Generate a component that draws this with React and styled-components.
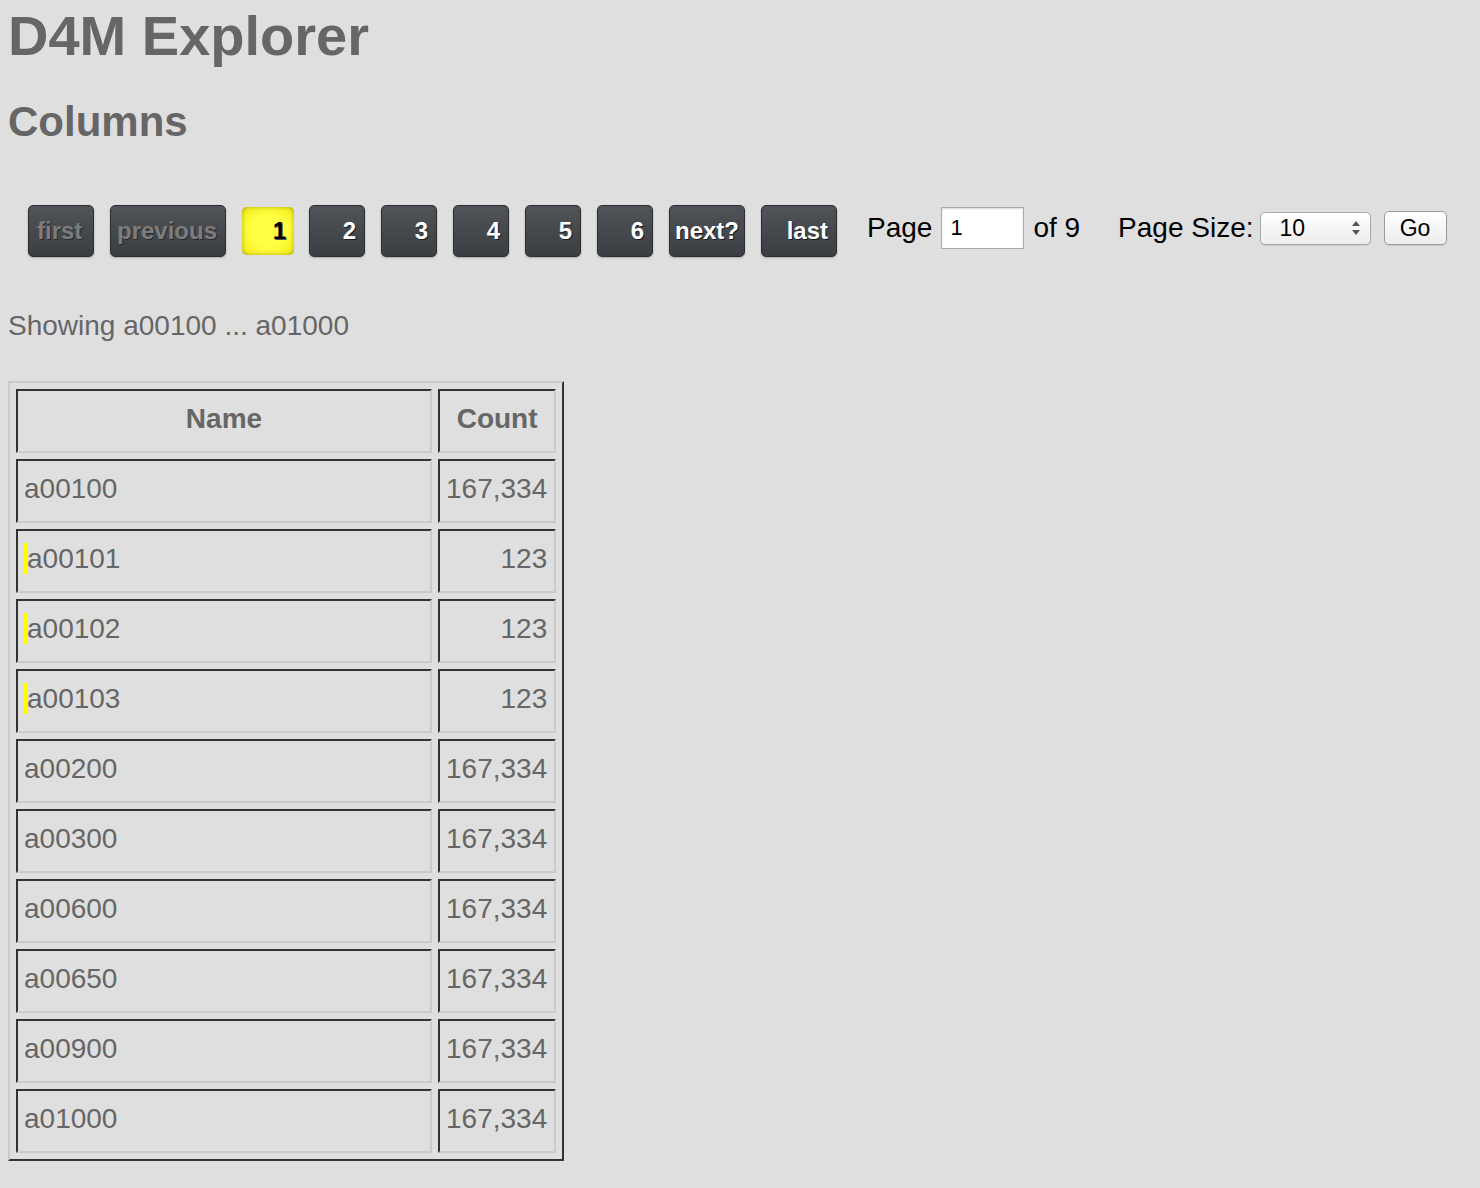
import React from "react"
import styled, { createGlobalStyle } from "styled-components"

const GlobalStyle = createGlobalStyle`
  html, body {
    margin: 0;
    padding: 0;
    background: #dfdfdf;
    font-family: "Liberation Sans", Arial, Helvetica, sans-serif;
    color: #666;
  }
`

const Page = styled.div`
  padding: 0 8px 40px 8px;
`

const Title = styled.h1`
  margin: 0;
  padding-top: 4px;
  font-size: 56px;
  line-height: 64px;
  font-weight: bold;
  color: #666;
`

const Subtitle = styled.h2`
  margin: 30px 0 0 0;
  font-size: 42px;
  line-height: 48px;
  font-weight: bold;
  color: #666;
`

const Pager = styled.div`
  display: flex;
  align-items: center;
  margin: 59px 0 0 20px;
  height: 52px;
`

const PageButtons = styled.div`
  display: flex;
  align-items: center;
  gap: 16px;
`

const PageButton = styled.a`
  box-sizing: border-box;
  display: flex;
  align-items: center;
  justify-content: ${(p) => p.$align || "flex-end"};
  width: ${(p) => p.$w}px;
  height: 52px;
  padding: 0 8px;
  border: 1px solid #2b2d30;
  border-radius: 5px;
  background: linear-gradient(#50545a, #3a3d41);
  box-shadow: 0 1px 2px rgba(0, 0, 0, 0.25);
  font-size: 24px;
  font-weight: bold;
  color: ${(p) => (p.$disabled ? "#7d7d7d" : "#fff")};
  text-shadow: ${(p) =>
    p.$disabled ? "1px 1px 0 #2a2a2a" : "1px 1px 0 #1c1c1c"};
  text-decoration: none;
  cursor: pointer;
`

const CurrentButton = styled.span`
  box-sizing: border-box;
  display: flex;
  align-items: center;
  justify-content: flex-end;
  width: 52px;
  height: 48px;
  margin-right: -1px;
  padding: 0 8px;
  border-radius: 5px;
  background: radial-gradient(ellipse at center, #ffff44 45%, #f4f020 85%, #d8d000 100%);
  box-shadow: inset 0 0 4px rgba(140, 130, 0, 0.6);
  font-size: 24px;
  font-weight: bold;
  color: #000;
  text-shadow: 1px 1px 0 #555;
`

const Controls = styled.div`
  display: flex;
  align-items: center;
  padding-bottom: 6px;
`

const Label = styled.span`
  font-size: 28px;
  color: #000;
  margin-left: ${(p) => p.$ml || 0}px;
`

const PageInput = styled.input`
  box-sizing: border-box;
  width: 83px;
  height: 42px;
  margin: 0 9px;
  padding: 0 8px;
  border: 1px solid #ababab;
  box-shadow: inset 0 1px 2px rgba(0, 0, 0, 0.15);
  background: #fff;
  font-family: "Liberation Sans", Arial, sans-serif;
  font-size: 22px;
  color: #000;
  outline: none;
`

const SizeSelect = styled.div`
  box-sizing: border-box;
  display: flex;
  align-items: center;
  justify-content: space-between;
  width: 111px;
  height: 33px;
  margin-left: 6px;
  padding: 0 9px 0 19px;
  border: 1px solid #a9a9a9;
  border-radius: 5px;
  background: linear-gradient(#ffffff, #ececec);
  box-shadow: 0 1px 1px rgba(0, 0, 0, 0.1);
  font-size: 23px;
  color: #000;
`

const GoButton = styled.button`
  box-sizing: border-box;
  width: 63px;
  height: 34px;
  margin-left: 13px;
  border: 1px solid #9c9c9c;
  border-radius: 5px;
  background: linear-gradient(#ffffff, #ececec);
  box-shadow: 0 1px 1px rgba(0, 0, 0, 0.1);
  font-family: "Liberation Sans", Arial, sans-serif;
  font-size: 23px;
  color: #000;
  padding: 0;
`

const Showing = styled.p`
  margin: 53px 0 0 0;
  font-size: 28px;
  line-height: 32px;
`

const Table = styled.table`
  margin-top: 39px;
  border-collapse: separate;
  border-spacing: 6px;
  border-style: solid;
  border-width: 2px;
  border-color: #cbcbcb #333 #333 #cbcbcb;
  font-size: 28px;
  color: #666;
`

const Cell = styled.td`
  box-sizing: border-box;
  border-style: solid;
  border-width: 2px;
  border-color: #333 #cbcbcb #cbcbcb #333;
  padding: 0 ${(p) => (p.$num ? 7 : 6)}px 4px 6px;
  line-height: 56px;
  height: 64px;
  width: ${(p) => p.$w}px;
  text-align: ${(p) => (p.$num ? "right" : "left")};
  font-weight: ${(p) => (p.$head ? "bold" : "normal")};
  white-space: nowrap;
  ${(p) => p.$head && "text-align: center;"}
`

const Marked = styled.span`
  margin-left: -1px;
  border-left: 4px solid #ffff00;
`

const rows = [
  { name: "a00100", count: "167,334" },
  { name: "a00101", count: "123", marked: true },
  { name: "a00102", count: "123", marked: true },
  { name: "a00103", count: "123", marked: true },
  { name: "a00200", count: "167,334" },
  { name: "a00300", count: "167,334" },
  { name: "a00600", count: "167,334" },
  { name: "a00650", count: "167,334" },
  { name: "a00900", count: "167,334" },
  { name: "a01000", count: "167,334" },
]

function Arrows() {
  return (
    <svg width="10" height="16" viewBox="0 0 10 16">
      <path d="M5 1 L9 6 L1 6 Z" fill="#555" />
      <path d="M5 15 L9 10 L1 10 Z" fill="#555" />
    </svg>
  )
}

export default function App() {
  return (
    <Page>
      <GlobalStyle />
      <Title>D4M Explorer</Title>
      <Subtitle>Columns</Subtitle>
      <Pager>
        <PageButtons>
          <PageButton $w={66} $align="flex-start" $disabled>first</PageButton>
          <PageButton $w={116} $disabled>previous</PageButton>
          <CurrentButton>1</CurrentButton>
          <PageButton $w={56}>2</PageButton>
          <PageButton $w={56}>3</PageButton>
          <PageButton $w={56}>4</PageButton>
          <PageButton $w={56}>5</PageButton>
          <PageButton $w={56}>6</PageButton>
          <PageButton $w={76} $align="center">next?</PageButton>
          <PageButton $w={76}>last</PageButton>
        </PageButtons>
        <Controls>
          <Label $ml={30}>Page</Label>
          <PageInput defaultValue="1" />
          <Label>of 9</Label>
          <Label $ml={38}>Page Size:</Label>
          <SizeSelect>
            <span>10</span>
            <Arrows />
          </SizeSelect>
          <GoButton>Go</GoButton>
        </Controls>
      </Pager>
      <Showing>Showing a00100 ... a01000</Showing>
      <Table>
        <thead>
          <tr>
            <Cell as="th" $head $w={416}>Name</Cell>
            <Cell as="th" $head $w={117}>Count</Cell>
          </tr>
        </thead>
        <tbody>
          {rows.map((r) => (
            <tr key={r.name}>
              <Cell $w={416}>
                {r.marked ? <Marked>{r.name}</Marked> : r.name}
              </Cell>
              <Cell $w={117} $num>{r.count}</Cell>
            </tr>
          ))}
        </tbody>
      </Table>
    </Page>
  )
}
